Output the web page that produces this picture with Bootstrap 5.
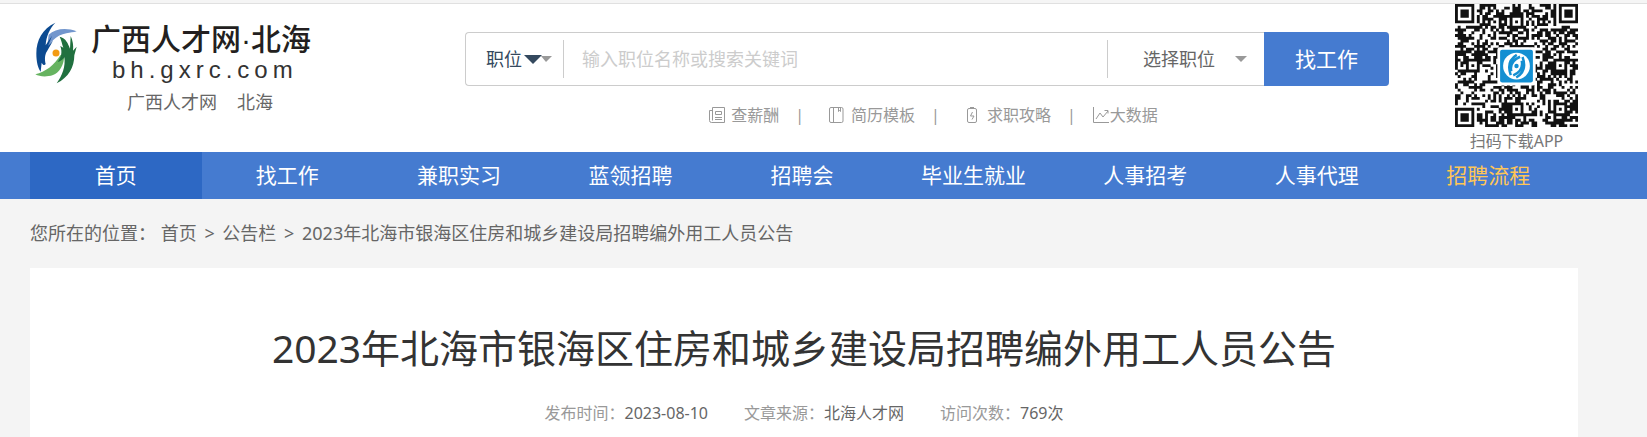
<!DOCTYPE html>
<html lang="zh-CN">
<head>
<meta charset="utf-8">
<meta name="viewport" content="width=device-width, initial-scale=1">
<title>2023年北海市银海区住房和城乡建设局招聘编外用工人员公告</title>
<link rel="stylesheet" href="https://cdn.jsdelivr.net/npm/bootstrap@5.3.0/dist/css/bootstrap.min.css">
<style>
body{font-family:"Noto Sans","Noto Sans CJK SC",sans-serif;background:#f4f4f4;color:#666;font-size:18px;line-height:28px}
a{color:inherit;text-decoration:none}
.shell{padding-left:30px;padding-right:69px}
.top-strip{height:4px;background:#f5f5f5;border-bottom:1px solid #e0e0e0}
.head-grid{display:grid;grid-template-columns:435px minmax(0,1fr) 189px;height:148px}
.brand-mark{width:42px;height:62px;margin:18px 14px 0 5px}
.brand-name{font-family:"Liberation Sans","Noto Sans CJK SC",sans-serif;font-size:30px;line-height:34px;font-weight:500;color:#231f20;margin-top:19px}
.brand-url{font-family:"Liberation Sans",sans-serif;font-size:24px;line-height:26px;color:#333;letter-spacing:5px;padding-left:21px}
.brand-sub{padding-left:97px;gap:20px;line-height:24px;margin-top:6px}
.search-bar{height:54px;margin-top:28px;border:1px solid #ccc;border-right:0;border-radius:4px;background:#fff}
.search-bar select,.search-bar input{height:38px;border:0;border-radius:0;background-color:#fff;outline:0;font-size:18px;line-height:28px;appearance:none}
.kind-select{width:98px;padding:0 0 0 20px;color:#34495e;border-right:1px solid #ccc!important;background:url("data:image/svg+xml,%3Csvg xmlns='http://www.w3.org/2000/svg' width='28' height='10'%3E%3Cpath d='M17 1h11l-6 6z' fill='%23999'/%3E%3Cpath d='M0 0h18l-9 9z' fill='%2334495e'/%3E%3C/svg%3E") no-repeat 58px 15px}
.word-input{min-width:0;padding:0 18px;color:#666}
.word-input::placeholder{color:#ccc;opacity:1}
.post-select{width:157px;padding:0 0 0 35px;color:#666;border-left:1px solid #ccc!important;background:url("data:image/svg+xml,%3Csvg xmlns='http://www.w3.org/2000/svg' width='12' height='6'%3E%3Cpath d='M0 0h12l-6 6z' fill='%23999'/%3E%3C/svg%3E") no-repeat 127px 16px}
.go-btn{width:125px;height:54px;border:0;border-radius:0 4px 4px 0;background:#457bd0;color:#fff;font-size:21px;line-height:28px;padding:0}
.go-btn:hover{background:#2d68c4;color:#fff}
.tool-links{font-size:16px;line-height:24px;color:#999;margin-top:17px;padding-left:12px}
.tool-links a{display:flex;align-items:center;gap:5px}
.tool-links .bar{margin:0 24px 0 16px}
.tool-links .bar.tight{margin-right:16px}
.tool-links svg{width:18px;height:18px;fill:none;stroke:#999}
.app-code{width:123px;font-size:16px;line-height:28px;color:#777}
.main-nav{background:#457bd0;padding-right:73px}
.main-nav a{flex:1 1 0;text-align:center;color:#fff;font-size:21px;line-height:47px}
.main-nav a.active{background:#2d68c4}
.main-nav a.hot{color:#ffc657}
.crumbs{padding-top:20px;padding-bottom:21px;white-space:pre}
.crumbs i{font-style:normal;margin:0 3px}
.article{background:#fff;padding:55px 20px 10px}
.article h1{font-size:39px;line-height:50px;font-weight:400;color:#333;margin:0 0 26px}
.meta{font-size:16px;line-height:28px;color:#999;gap:36px}
.meta b{font-weight:400;color:#666}
</style>
</head>
<body>
<header class="bg-white">
  <div class="top-strip"></div>
  <div class="shell head-grid">
    <div>
      <div class="d-flex">
        <svg class="brand-mark flex-shrink-0" viewBox="104 65 126 184" aria-hidden="true">
          <path d="M229 92C198 80 164 84 145 102L138 156C146 124 168 104 198 98C210 96 220 95 229 92Z" fill="#7296cd"/>
          <path d="M105 221C135 214 162 194 180 164L192 160C192 196 176 216 158 223C138 230 118 228 105 221Z" fill="#66b360"/>
          <path d="M165 66C126 84 108 119 108 158C108 184 113 203 121 213L124 186C128 193 132 196 136 190C132 176 134 160 140 152L158 120L143 136L155 105L136 134C137 108 148 84 165 66Z" fill="#0c4a90"/>
          <path d="M178 108C184 120 185 131 189 141L180 136C186 154 184 168 172 184C182 182 188 176 192 170C196 197 186 225 169 248C205 231 222 199 222 164L229 138L218 150C220 134 217 119 211 106L209 144C203 129 197 112 178 108Z" fill="#21703f"/>
          <circle cx="167" cy="157" r="10.500" fill="#f39b13"/>
        </svg>
        <div>
          <div class="brand-name">广西人才网·北海</div>
          <div class="brand-url">bh.gxrc.com</div>
        </div>
      </div>
      <div class="brand-sub d-flex"><a href="#">广西人才网</a><a href="#">北海</a></div>
    </div>
    <div>
      <form class="search-bar d-flex align-items-center">
        <select class="kind-select" aria-label="搜索类型"><option>职位</option></select>
        <input class="word-input flex-grow-1" type="text" placeholder="输入职位名称或搜索关键词" aria-label="关键词">
        <select class="post-select" aria-label="职位类别"><option>选择职位</option></select>
        <button class="btn go-btn flex-shrink-0" type="button">找工作</button>
      </form>
      <div class="tool-links d-flex justify-content-center">
        <a href="#"><svg viewBox="0 0 18 18" aria-hidden="true"><path d="M4.500 1.500h12v15h-13a2 2 0 0 1-2-2v-10h3zM4.500 4v10.500M7.500 5.500h6v3h-6zM7 11.500h7M7 13.500h7"/></svg>查薪酬</a>
        <span class="bar">|</span>
        <a href="#"><svg viewBox="0 0 18 18" aria-hidden="true"><path d="M3 1.500h10.500a1.500 1.500 0 0 1 1.500 1.500v12a1.500 1.500 0 0 1-1.500 1.500H3a1.500 1.500 0 0 1-1.500-1.500V3A1.500 1.500 0 0 1 3 1.500zM5.500 1.500v15M10.500 2v3.500l1-1 1 1V2"/></svg>简历模板</a>
        <span class="bar">|</span>
        <a href="#"><svg viewBox="0 0 18 18" aria-hidden="true"><path d="M5 2.500h6a1.500 1.500 0 0 1 1.500 1.500v11a1.500 1.500 0 0 1-1.500 1.500H5a1.500 1.500 0 0 1-1.500-1.500V4A1.500 1.500 0 0 1 5 2.500zM6 1.500h4M8.500 6l-2 4h3.500l-2 3.500"/></svg>求职攻略</a>
        <span class="bar tight">|</span>
        <a href="#" class="gap-0"><svg viewBox="0 0 18 18" aria-hidden="true"><path d="M1.500 1v15.500H17M4 13l4-6 3 4 5-6M12.500 4.500H16V7.500"/></svg>大数据</a>
      </div>
    </div>
    <div class="app-code ms-auto text-center">
      <svg id="qr" class="d-block" width="123" height="123" viewBox="0 0 45 45" role="img" aria-label="APP 二维码">
        <path id="qr-cells" fill="#111"/>
        <rect x="15.500" y="15.800" width="14" height="14" rx="1" fill="#fff"/>
        <rect x="16.500" y="16.700" width="12" height="12" rx=".8" fill="#148fd2"/>
        <circle cx="22.500" cy="22.700" r="4.900" fill="#fff"/>
        <g fill="none" stroke="#148fd2" stroke-width=".9">
          <path d="M22.600 18.600Q18.600 21 20.400 26M23.800 19.300Q19.800 21 20.600 24.600M22.400 26.900Q26.600 24.400 24.700 19.400M21.300 26.100Q25.200 24.500 24.400 20.800"/>
        </g>
        <circle cx="22.500" cy="22.700" r=".8" fill="#148fd2"/>
      </svg>
      <a href="#">扫码下载APP</a>
    </div>
  </div>
</header>
<nav class="main-nav shell d-flex" aria-label="主导航">
  <a href="#" class="active">首页</a><a href="#">找工作</a><a href="#">兼职实习</a><a href="#">蓝领招聘</a><a href="#">招聘会</a><a href="#">毕业生就业</a><a href="#">人事招考</a><a href="#">人事代理</a><a href="#" class="hot">招聘流程</a>
</nav>
<main class="shell">
  <div class="crumbs">您所在的位置： <a href="#">首页</a> <i>&gt;</i> <a href="#">公告栏</a> <i>&gt;</i> 2023年北海市银海区住房和城乡建设局招聘编外用工人员公告</div>
  <article class="article text-center">
    <h1>2023年北海市银海区住房和城乡建设局招聘编外用工人员公告</h1>
    <div class="meta d-flex justify-content-center">
      <span>发布时间：<b>2023-08-10</b></span>
      <span>文章来源：<b>北海人才网</b></span>
      <span>访问次数：<b>769次</b></span>
    </div>
  </article>
</main>
<script src="https://cdn.jsdelivr.net/npm/bootstrap@5.3.0/dist/js/bootstrap.bundle.min.js"></script>
<script>
// 45 x 45 code: three finder squares, alignment squares, timing lines, data cells
(function () {
  var n = 45, d = "", seed = 20230810;
  function ring(x, y, cx, cy) { return Math.max(Math.abs(x - cx), Math.abs(y - cy)); }
  for (var y = 0; y < n; y++) for (var x = 0; x < n; x++) {
    seed = (seed * 1103515245 + 12345) % 2147483648;
    var on = (seed / 65536 | 0) % 100 < 54;
    if (x === 6 || y === 6) on = (x + y) % 2 === 0;
    [[6,22],[22,6],[38,22],[22,38],[38,38]].forEach(function (c) {
      var r = ring(x, y, c[0], c[1]);
      if (r < 3) on = r !== 1;
    });
    [[3,3],[41,3],[3,41]].forEach(function (c) {
      var r = ring(x, y, c[0], c[1]);
      if (r < 5) on = r < 2 || r === 3;
    });
    if (on) d += "M" + x + " " + y + "h1.050v1.050h-1.050z";
  }
  document.getElementById("qr-cells").setAttribute("d", d);
})();
</script>
</body>
</html>
